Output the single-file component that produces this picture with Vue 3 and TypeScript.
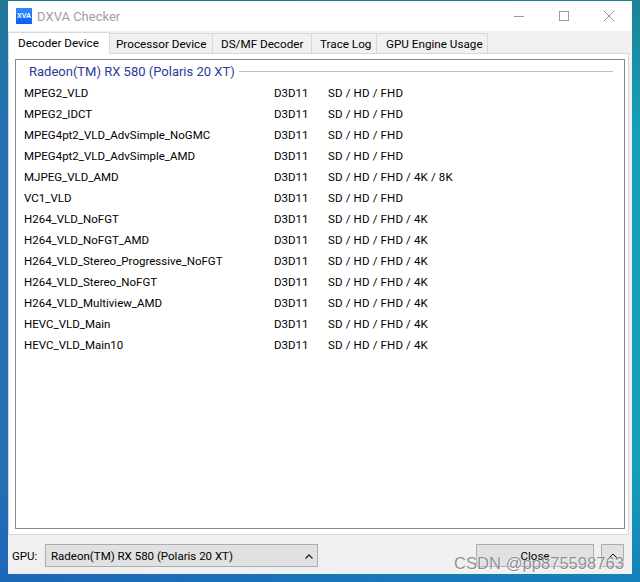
<script setup lang="ts">
const rows: [string, string][] = [
  ['MPEG2_VLD', 'SD / HD / FHD'],
  ['MPEG2_IDCT', 'SD / HD / FHD'],
  ['MPEG4pt2_VLD_AdvSimple_NoGMC', 'SD / HD / FHD'],
  ['MPEG4pt2_VLD_AdvSimple_AMD', 'SD / HD / FHD'],
  ['MJPEG_VLD_AMD', 'SD / HD / FHD / 4K / 8K'],
  ['VC1_VLD', 'SD / HD / FHD'],
  ['H264_VLD_NoFGT', 'SD / HD / FHD / 4K'],
  ['H264_VLD_NoFGT_AMD', 'SD / HD / FHD / 4K'],
  ['H264_VLD_Stereo_Progressive_NoFGT', 'SD / HD / FHD / 4K'],
  ['H264_VLD_Stereo_NoFGT', 'SD / HD / FHD / 4K'],
  ['H264_VLD_Multiview_AMD', 'SD / HD / FHD / 4K'],
  ['HEVC_VLD_Main', 'SD / HD / FHD / 4K'],
  ['HEVC_VLD_Main10', 'SD / HD / FHD / 4K'],
]
const tabs: { label: string; width: number; pad: number }[] = [
  { label: 'Processor Device', width: 104, pad: 6 },
  { label: 'DS/MF Decoder', width: 100, pad: 8 },
  { label: 'Trace Log', width: 66, pad: 8 },
  { label: 'GPU Engine Usage', width: 112, pad: 9 },
]
</script>

<template>
  <div class="desktop">
    <div class="window">
      <header class="titlebar">
        <div class="appicon">XVA</div>
        <div class="title">DXVA Checker</div>
        <div class="controls">
          <svg width="12" height="12" viewBox="0 0 12 12"><path d="M1 6.5h10" stroke="#9a9a9a" fill="none" /></svg>
          <svg width="12" height="12" viewBox="0 0 12 12"><rect x="1.5" y="1.5" width="9" height="9" stroke="#9a9a9a" fill="none" /></svg>
          <svg width="12" height="12" viewBox="0 0 12 12"><path d="M1 1l10 10M11 1L1 11" stroke="#9a9a9a" fill="none" /></svg>
        </div>
      </header>
      <nav class="tabs">
        <div class="tab active">Decoder Device</div>
        <div
          v-for="t in tabs"
          :key="t.label"
          class="tab"
          :style="{ width: t.width + 'px', paddingLeft: t.pad + 'px' }"
        >{{ t.label }}</div>
      </nav>
      <main class="panel">
        <section class="list">
          <div class="group">
            <span class="gname">Radeon(TM) RX 580 (Polaris 20 XT)</span>
            <span class="gline"></span>
          </div>
          <div v-for="r in rows" :key="r[0]" class="row">
            <span class="c1">{{ r[0] }}</span>
            <span class="c2">D3D11</span>
            <span class="c3">{{ r[1] }}</span>
          </div>
        </section>
      </main>
      <footer class="footer">
        <span class="gpu">GPU:</span>
        <div class="combo">
          <span>Radeon(TM) RX 580 (Polaris 20 XT)</span>
          <svg width="8" height="5" viewBox="0 0 8 5"><path d="M0.5 4.5L4 1l3.5 3.5" stroke="#222" stroke-width="1.3" fill="none" /></svg>
        </div>
        <div class="btn close">Close</div>
        <div class="btn up">
          <svg width="10" height="6" viewBox="0 0 10 6"><path d="M0.5 5.5L5 1l4.5 4.5" stroke="#111" fill="none" /></svg>
        </div>
      </footer>
    </div>
    <div class="watermark">CSDN @pp875598763</div>
  </div>
</template>

<style>
html, body { margin: 0; padding: 0; }
</style>

<style scoped>
.desktop {
  position: relative;
  width: 640px;
  height: 582px;
  overflow: hidden;
  padding: 1px 8px 8px;
  box-sizing: border-box;
  background:
    linear-gradient(180deg, rgba(30, 120, 140, 0.75) 0%, rgba(30, 120, 170, 0) 22%, rgba(20, 90, 190, 0) 80%, rgba(20, 90, 190, 0.45) 100%),
    linear-gradient(90deg, #2371b4 0%, #2371b4 2%, #159fb8 97%, #159fb8 100%);
  font-family: Roboto, "Noto Sans", sans-serif;
  font-size: 11.5px;
  color: #000;
}
.window {
  height: 573px;
  display: flex;
  flex-direction: column;
  background: #f0f0f0;
}
.titlebar {
  height: 30px;
  flex: none;
  background: #fff;
  display: flex;
  align-items: center;
  padding-left: 8px;
}
.appicon {
  width: 16px;
  height: 16px;
  background: linear-gradient(#2f8cff, #0a5ff0);
  color: #fff;
  font: bold 7px "Liberation Sans", sans-serif;
  line-height: 16px;
  text-align: center;
}
.title {
  margin-left: 5px;
  color: #a0a0a0;
  font-size: 13px;
  flex: 1;
}
.controls {
  display: flex;
  gap: 33px;
  padding-right: 17px;
}
.tabs {
  height: 22px;
  flex: none;
  display: flex;
  align-items: flex-end;
}
.tab {
  height: 20px;
  box-sizing: border-box;
  line-height: 20px;
  border: 1px solid #d9d9d9;
  border-bottom: none;
  margin-left: -1px;
  white-space: nowrap;
  color: #000;
  font-size: 11.7px;
}
.tab.active {
  width: 102px;
  height: 22px;
  margin: 0 0 -1px;
  padding-left: 9px;
  background: #fff;
  position: relative;
  z-index: 1;
}
.panel {
  height: 482px;
  flex: none;
  box-sizing: border-box;
  border: 1px solid #d9d9d9;
  margin-right: 3px;
  background: #fff;
  padding: 5px 3px 6px 6px;
}
.list {
  height: 470px;
  box-sizing: border-box;
  border: 1px solid #828790;
  background: #fff;
  padding: 0 11px 0 8px;
}
.group {
  display: flex;
  align-items: center;
  height: 22px;
  margin-bottom: 1px;
  padding-left: 5px;
  color: #2a3a9a;
  font-size: 13px;
}
.gline {
  flex: 1;
  height: 1px;
  background: #b4bad8;
  margin-left: 4px;
}
.row {
  display: flex;
  height: 21px;
  line-height: 21px;
  color: #000;
}
.c1 { width: 250px; }
.c2 { width: 54px; }
.c3 { letter-spacing: 0.15px; }
.footer {
  flex: 1;
  display: flex;
  align-items: flex-start;
  padding: 9px 8px 0 4px;
}
.gpu { line-height: 24px; width: 33px; }
.combo {
  width: 273px;
  height: 23px;
  box-sizing: border-box;
  border: 1px solid #adadad;
  background: #e1e1e1;
  display: flex;
  align-items: center;
  justify-content: space-between;
  padding: 1px 4px 0 5px;
}
.btn {
  height: 23px;
  box-sizing: border-box;
  border: 1px solid #adadad;
  background: #e1e1e1;
  display: flex;
  align-items: center;
  justify-content: center;
}
.close { width: 118px; margin-left: 158px; }
.up { width: 23px; margin-left: 7px; }
.watermark {
  position: absolute;
  left: 454px;
  top: 554px;
  font: 16.6px "Liberation Sans", sans-serif;
  color: rgba(100, 100, 100, 0.72);
  text-shadow: 0 0 1px #fff, 1px 1px 1px rgba(255, 255, 255, 0.6);
  white-space: nowrap;
}
</style>
